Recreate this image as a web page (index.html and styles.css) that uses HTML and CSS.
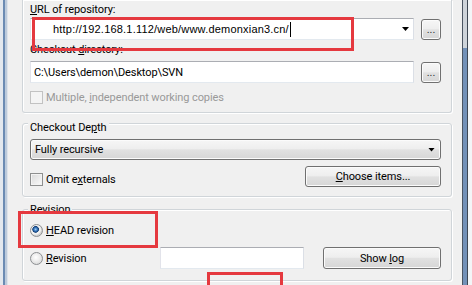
FILE: index.html
```html
<!DOCTYPE html>
<html>
<head>
<meta charset="utf-8">
<title>Checkout</title>
<link rel="stylesheet" href="styles.css">
</head>
<body>
<div class="window">
  <div class="frame-l"></div>
  <div class="content">
    <section class="group g1">
      <div class="lbl"><u>U</u>RL of repository:</div>
      <div class="row">
        <div class="edit combo"><span class="url">http://192.168.1.112/web/www.demonxian3.cn/</span><span class="caret"></span><span class="arrow"></span></div>
        <button class="btn browse">...</button>
      </div>
      <div class="lbl lbl2">Checkout <u>d</u>irectory:</div>
      <div class="row row2">
        <div class="edit path">C:\Users\demon\Desktop\SVN</div>
        <button class="btn browse">...</button>
      </div>
      <div class="check disabled"><span class="cb"></span><span>Multiple, <u>i</u>ndependent working copies</span></div>
    </section>

    <section class="group g2">
      <div class="caption">Checkout De<u>p</u>th</div>
      <div class="btn select"><span>Fully recursive</span><span class="arrow"></span></div>
      <div class="row opts">
        <div class="check omit"><span class="cb"></span><span>Omit e<u>x</u>ternals</span></div>
        <button class="btn choose"><u>C</u>hoose items...</button>
      </div>
    </section>

    <section class="group g3">
      <div class="caption cap3">Revision</div>
      <div class="radio head"><span class="rb on"></span><span><u>H</u>EAD revision</span></div>
      <div class="row rev">
        <div class="radio revlbl"><span class="rb"></span><span><u>R</u>evision</span></div>
        <div class="edit revnum"></div>
        <button class="btn showlog">Show <u>l</u>og</button>
      </div>
    </section>
  </div>
  <div class="frame-r"></div>
</div>
<div class="mark m1"></div>
<div class="mark m2"></div>
<div class="mark m3"></div>
</body>
</html>
```
FILE: styles.css
```css
* { box-sizing: border-box; }
body {
  margin: 0;
  width: 472px;
  height: 285px;
  overflow: hidden;
  position: relative;
  background: #f0f0f0;
  color: #000;
  font: 11px Roboto, "Liberation Sans", sans-serif;
  letter-spacing: -0.1px;
}
u { text-decoration: underline; text-underline-offset: 1px; }

.window { display: flex; height: 285px; }
.frame-l {
  width: 8px;
  background: linear-gradient(to right, #e3e8ee 0 3px, #6b8bb3 3px 5px, #bccadb 5px 7px, #dde3ea 7px 8px);
}
.frame-r {
  width: 10px;
  background:
    linear-gradient(to right, #4b5562 0 1px, transparent 1px 5px, #3e4753 5px 6px, #f3f5f7 6px),
    linear-gradient(to bottom, #cfd4da 0 48px, #7391b8 48px);
}
.content { flex: 1; padding: 0 10px 0 14px; }

.group {
  border: 1px solid #d0d5d9;
  border-radius: 3px;
  box-shadow: inset 1px 1px 0 #fff, 1px 1px 0 #fff;
  padding: 0 10px 0 7px;
}
.g1 { border-top: none; border-radius: 0 0 3px 3px; padding-top: 2px; padding-bottom: 7px; }
.g2 { margin-top: 10px; padding-bottom: 9px; }
.g3 { margin-top: 12px; padding-bottom: 11px; }

.lbl { line-height: 15px; height: 15px; }
.lbl2 { margin-top: 2px; }
.row { display: flex; align-items: center; gap: 7px; margin-top: 1px; }
.row2 { margin-top: 4px; }

.edit {
  height: 22px;
  background: #fff;
  border: 1px solid;
  border-color: #abadb3 #dbdfe6 #e3e9ef #e2e3ea;
  display: flex;
  align-items: center;
}
.combo { flex: 1; }
.path { flex: 1; padding-left: 3px; }
.url { font: 11px "Liberation Sans", sans-serif; letter-spacing: 0.2px; padding-left: 22px; }
.caret { width: 1px; height: 15px; background: #000; margin-left: 1px; }
.arrow {
  width: 7px;
  height: 4px;
  background: #000;
  clip-path: polygon(0 0, 100% 0, 50% 100%);
  margin-left: auto;
}
.combo .arrow { margin-right: 4px; }

.btn {
  font: inherit;
  letter-spacing: inherit;
  color: #000;
  border: 1px solid #707070;
  border-radius: 3px;
  background: linear-gradient(#f6f6f6 0%, #eeeeee 46%, #e1e1e1 52%, #d6d6d6 100%);
  box-shadow: inset 0 0 0 1px #fbfbfb;
  padding: 0;
}
.browse { width: 20px; height: 21px; line-height: 17px; color: #333; }

.check, .radio { display: flex; align-items: center; height: 15px; gap: 3px; }
.check { margin-top: 7px; }
.disabled { color: #999; }
.cb {
  width: 13px;
  height: 13px;
  border: 1px solid #8e8f8f;
  background: linear-gradient(135deg, #d9d9d9, #fbfbfb);
  box-shadow: inset 0 0 0 1px #f3f3f3;
}
.disabled .cb { border-color: #c2c2c2; background: #f4f4f4; box-shadow: none; }

.caption {
  width: fit-content;
  margin-left: -2px;
  padding: 0 2px;
  background: #f0f0f0;
  line-height: 15px;
  height: 15px;
  margin-top: -4px;
}
.cap3 { margin-top: -8px; }

.select {
  display: flex;
  align-items: center;
  height: 21px;
  margin-top: 4px;
  padding: 0 5px 0 4px;
}
.opts { justify-content: space-between; align-items: flex-end; margin-top: 6px; height: 21px; }
.omit { margin-top: 0; }
.choose { width: 136px; height: 21px; }

.head { margin-top: 6px; }
.rev { margin-top: 9px; gap: 0; }
.revlbl { flex: 0 0 130px; }
.revnum { width: 144px; }
.showlog { width: 118px; height: 22px; margin-left: auto; }

.rb {
  width: 13px;
  height: 13px;
  border-radius: 50%;
  border: 1px solid #8c8f92;
  background: radial-gradient(circle at 45% 40%, #ffffff 0, #ececec 45%, #cfcfcf 100%);
}
.rb.on {
  background: radial-gradient(circle at 42% 40%, #a6d2f6 0, #3b7bc0 1.6px, #123f78 3px, #e9e9e9 3.6px, #f7f7f7 4.6px, #d2d2d2 6px);
}

.mark { position: absolute; border: 3px solid #e5393f; }
.m1 { left: 32px; top: 17px; width: 322px; height: 34px; }
.m2 { left: 18px; top: 211px; width: 140px; height: 37px; }
.m3 { left: 207px; top: 272px; width: 76px; height: 20px; border-bottom: none; }
```
